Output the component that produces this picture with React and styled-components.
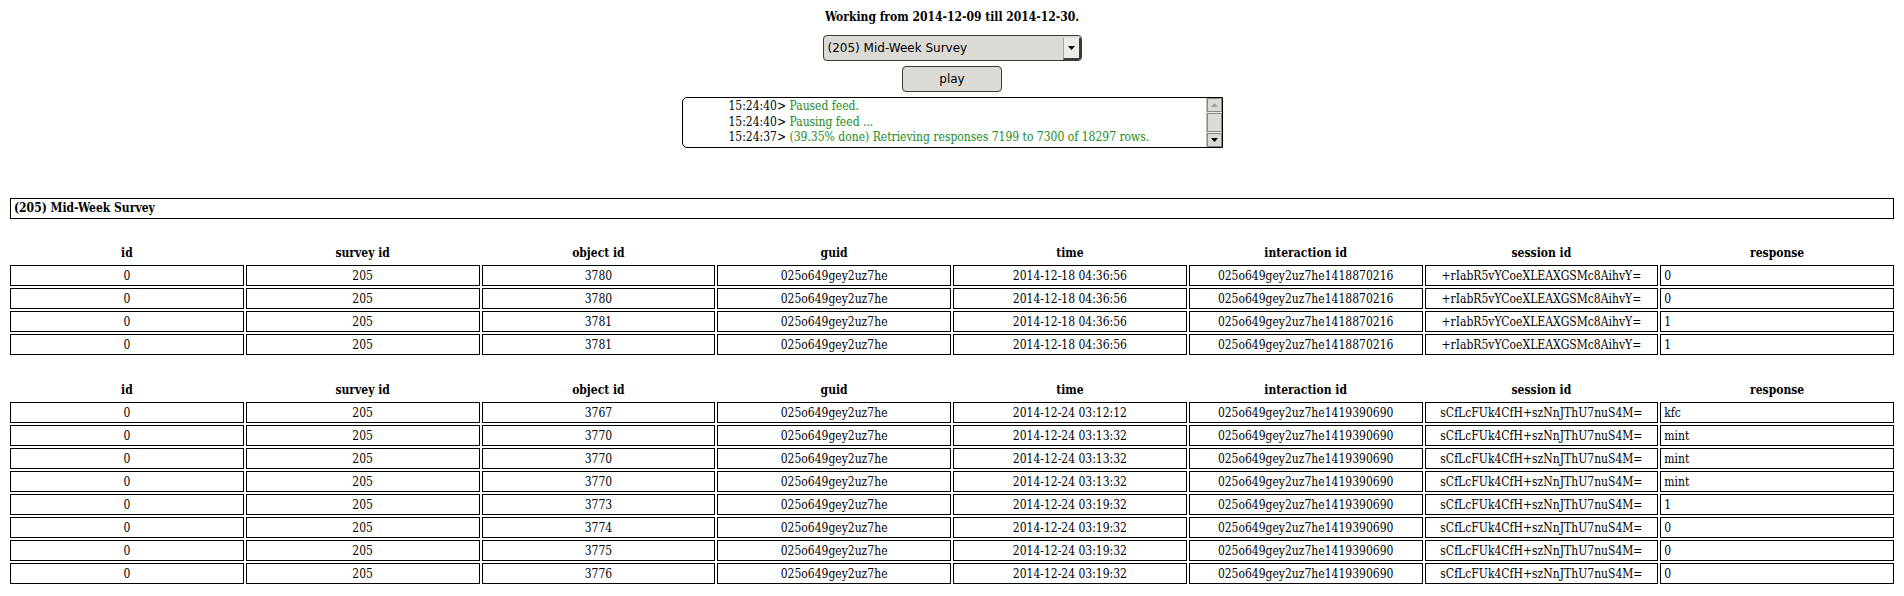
import React from 'react';
import styled, { createGlobalStyle } from 'styled-components';

const Global = createGlobalStyle`
  html, body { background: #fff; }
  body {
    margin: 8px;
    font-family: "DejaVu Serif", "Liberation Serif", serif;
    font-stretch: condensed;
    font-size: 12px;
    color: #000;
  }
`;

const Page = styled.div`
  display: flex;
  flex-direction: column;
`;

const Controls = styled.div`
  display: flex;
  flex-direction: column;
  align-items: center;
`;

const Title = styled.div`
  font-weight: bold;
  line-height: 19px;
`;

const Select = styled.div`
  box-sizing: border-box;
  width: 259px;
  height: 26px;
  margin-top: 8px;
  display: flex;
  border: 1px solid #3a3a38;
  border-radius: 4px;
  background: #dcdad5;
  font-family: "DejaVu Sans", sans-serif;
  font-stretch: normal;
  font-size: 12px;
  overflow: hidden;
`;

const SelectLabel = styled.div`
  flex: 1;
  display: flex;
  align-items: center;
  padding-left: 4px;
`;

const SelectArrow = styled.div`
  width: 15px;
  display: flex;
  align-items: center;
  justify-content: center;
  border-left: 1px solid #a8a69f;
  border-right: 2px solid #3a3a38;
  border-bottom: 2px solid #3a3a38;
  margin: 2px 0 0 0;
  background: #edebe8;
`;

const PlayButton = styled.button`
  box-sizing: border-box;
  width: 100px;
  height: 26px;
  margin-top: 5px;
  border: 1px solid #3a3a38;
  border-radius: 4px;
  background: #dcdad5;
  font-family: "DejaVu Sans", sans-serif;
  font-size: 12px;
  color: #000;
  padding: 0;
`;

const LogBox = styled.div`
  box-sizing: border-box;
  width: 541px;
  height: 51px;
  margin-top: 5px;
  display: flex;
  border: 1px solid #000;
  border-radius: 5px 0 0 5px;
`;

const LogList = styled.ul`
  flex: 1;
  margin: 0;
  padding: 1px 0 0 46px;
  list-style: none;
  line-height: 15.5px;
  font-size: 12px;
  white-space: nowrap;
  overflow: hidden;
`;

const LogStamp = styled.span`
  color: #000;
`;

const LogMsg = styled.span`
  color: #1a8a1a;
`;

const Scrollbar = styled.div`
  width: 15px;
  display: flex;
  flex-direction: column;
  border-left: 1px solid #bbb;
  background: #edebe8;
`;

const ScrollBtn = styled.div`
  box-sizing: border-box;
  height: 14px;
  display: flex;
  align-items: center;
  justify-content: center;
  background: #dcdad5;
  border: 1px solid #8a8883;
`;

const Thumb = styled.div`
  flex: 1;
  box-sizing: border-box;
  margin: 1px 0;
  background: #dcdad5;
  border: 1px solid #8a8883;
`;

const Section = styled.div`
  margin-top: 50px;
  display: flex;
  flex-direction: column;
  gap: 22px;
`;

const SectionHeader = styled.div`
  box-sizing: border-box;
  margin: 0 2px 1px;
  height: 21px;
  border: 1px solid #000;
  padding: 0 3px;
  font-weight: bold;
  line-height: 19px;
`;

const Table = styled.table`
  width: 100%;
  table-layout: fixed;
  border-spacing: 2px;
  border-collapse: separate;
`;

const Th = styled.th`
  padding: 1px;
  line-height: 17px;
  font-weight: bold;
  text-align: center;
`;

const Td = styled.td`
  padding: 2px 1px 0 ${(p) => (p.$left ? '3px' : '1px')};
  border: 1px solid #000;
  line-height: 17px;
  text-align: ${(p) => (p.$left ? 'left' : 'center')};
  white-space: nowrap;
  overflow: hidden;
`;

const columns = ['id', 'survey id', 'object id', 'guid', 'time', 'interaction id', 'session id', 'response'];

const g = '025o649gey2uz7he';
const i1 = '025o649gey2uz7he1418870216';
const s1 = '+rIabR5vYCoeXLEAXGSMc8AihvY=';
const i2 = '025o649gey2uz7he1419390690';
const s2 = 'sCfLcFUk4CfH+szNnJThU7nuS4M=';

const tables = [
  [
    ['0', '205', '3780', g, '2014-12-18 04:36:56', i1, s1, '0'],
    ['0', '205', '3780', g, '2014-12-18 04:36:56', i1, s1, '0'],
    ['0', '205', '3781', g, '2014-12-18 04:36:56', i1, s1, '1'],
    ['0', '205', '3781', g, '2014-12-18 04:36:56', i1, s1, '1'],
  ],
  [
    ['0', '205', '3767', g, '2014-12-24 03:12:12', i2, s2, 'kfc'],
    ['0', '205', '3770', g, '2014-12-24 03:13:32', i2, s2, 'mint'],
    ['0', '205', '3770', g, '2014-12-24 03:13:32', i2, s2, 'mint'],
    ['0', '205', '3770', g, '2014-12-24 03:13:32', i2, s2, 'mint'],
    ['0', '205', '3773', g, '2014-12-24 03:19:32', i2, s2, '1'],
    ['0', '205', '3774', g, '2014-12-24 03:19:32', i2, s2, '0'],
    ['0', '205', '3775', g, '2014-12-24 03:19:32', i2, s2, '0'],
    ['0', '205', '3776', g, '2014-12-24 03:19:32', i2, s2, '0'],
  ],
];

const log = [
  ['15:24:40', 'Paused feed.'],
  ['15:24:40', 'Pausing feed ...'],
  ['15:24:37', '(39.35% done) Retrieving responses 7199 to 7300 of 18297 rows.'],
];

const Tri = ({ up, color }) => (
  <svg width="7" height="4" viewBox="0 0 7 4">
    <polygon points={up ? '0,4 7,4 3.5,0' : '0,0 7,0 3.5,4'} fill={color} />
  </svg>
);

export default function App() {
  return (
    <Page>
      <Global />
      <Controls>
        <Title>Working from 2014-12-09 till 2014-12-30.</Title>
        <Select>
          <SelectLabel>(205) Mid-Week Survey</SelectLabel>
          <SelectArrow>
            <Tri color="#000" />
          </SelectArrow>
        </Select>
        <PlayButton>play</PlayButton>
        <LogBox>
          <LogList>
            {log.map(([t, m], k) => (
              <li key={k}>
                <LogStamp>{t}&gt; </LogStamp>
                <LogMsg>{m}</LogMsg>
              </li>
            ))}
          </LogList>
          <Scrollbar>
            <ScrollBtn>
              <Tri up color="#a0a0a0" />
            </ScrollBtn>
            <Thumb />
            <ScrollBtn>
              <Tri color="#000" />
            </ScrollBtn>
          </Scrollbar>
        </LogBox>
      </Controls>
      <Section>
        <SectionHeader>(205) Mid-Week Survey</SectionHeader>
        {tables.map((rows, ti) => (
          <Table key={ti}>
            <thead>
              <tr>
                {columns.map((c) => (
                  <Th key={c}>{c}</Th>
                ))}
              </tr>
            </thead>
            <tbody>
              {rows.map((r, ri) => (
                <tr key={ri}>
                  {r.map((v, ci) => (
                    <Td key={ci} $left={ci === 7}>
                      {v}
                    </Td>
                  ))}
                </tr>
              ))}
            </tbody>
          </Table>
        ))}
      </Section>
    </Page>
  );
}
